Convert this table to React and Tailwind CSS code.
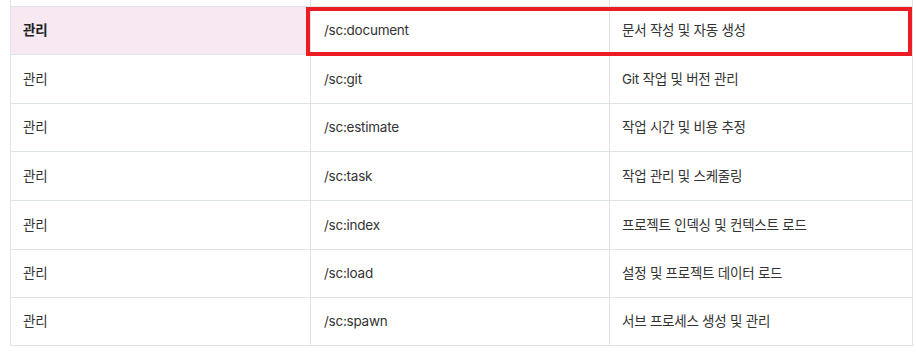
import React from 'react';

const rows = [
  { cat: '관리', cmd: '/sc:document', desc: '문서 작성 및 자동 생성', h: 'h-[48px]', active: true },
  { cat: '관리', cmd: '/sc:git', desc: 'Git 작업 및 버전 관리', h: 'h-[49px]' },
  { cat: '관리', cmd: '/sc:estimate', desc: '작업 시간 및 비용 추정', h: 'h-[48px]' },
  { cat: '관리', cmd: '/sc:task', desc: '작업 관리 및 스케줄링', h: 'h-[49px]' },
  { cat: '관리', cmd: '/sc:index', desc: '프로젝트 인덱싱 및 컨텍스트 로드', h: 'h-[49px]' },
  { cat: '관리', cmd: '/sc:load', desc: '설정 및 프로젝트 데이터 로드', h: 'h-[48px]' },
  { cat: '관리', cmd: '/sc:spawn', desc: '서브 프로세스 생성 및 관리', h: 'h-[48px]' },
];

const cols = 'grid grid-cols-[300px_299px_304px]';

const App = () => {
  return (
    <div
      className="w-[916px] h-[353px] bg-white overflow-hidden text-[13.5px] tracking-[-0.25px] text-[#333]"
      style={{ fontFamily: 'Inter, "Noto Sans CJK KR", sans-serif' }}
    >
      <div className="relative ml-[10px] w-[903px]">
        {/* tail of the previous row */}
        <div className={`${cols} h-[6px]`}>
          <div className="border-l border-[#dfe3ea]" />
          <div className="border-l border-[#dfe3ea]" />
          <div className="border-l border-r border-[#dfe3ea]" />
        </div>
        <div className="border-t border-[#dfe3ea]">
          {rows.map((r, i) => (
            <div
              key={i}
              className={`${cols} ${r.h} border-b border-[#dfe3ea] ${r.active ? 'bg-[#f7e8f1]' : 'bg-white'}`}
            >
              <div className={`flex items-center pl-[12px] border-l border-[#dfe3ea] ${r.active ? 'font-bold text-[#222]' : ''}`}>
                {r.cat}
              </div>
              <div className={`flex items-center pl-[13px] border-l border-[#dfe3ea] ${r.active ? 'bg-white' : ''}`}>
                {r.cmd}
              </div>
              <div className={`flex items-center pl-[12px] border-l border-r border-[#dfe3ea] ${r.active ? 'bg-white' : ''}`}>
                {r.desc}
              </div>
            </div>
          ))}
        </div>
        <div className="absolute left-[296px] top-[7px] w-[606px] h-[49px] border-[4px] border-[#ec1c24] pointer-events-none" />
      </div>
    </div>
  );
};

export default App;
